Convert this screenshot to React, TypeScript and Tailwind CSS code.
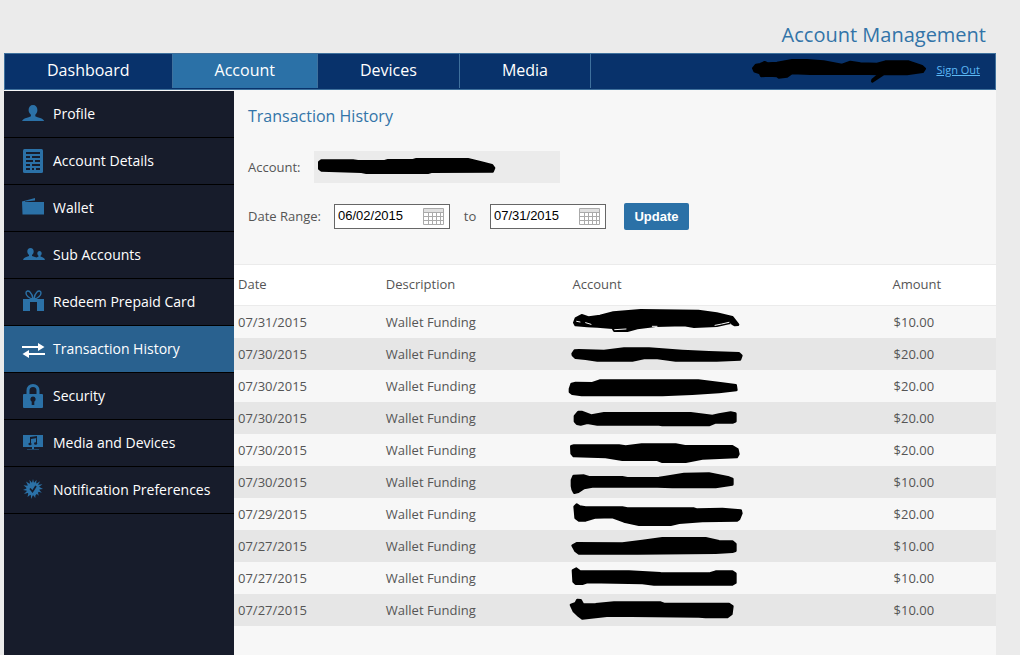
import { useState } from "react";
import type { ReactNode } from "react";
import clsx from "clsx";

const tabs = ["Dashboard", "Account", "Devices", "Media"];

const menu: { label: string; icon: ReactNode }[] = [
  {
    label: "Profile",
    icon: (
      <path d="M12 3c2.700 0 4.400 2 4.400 5 0 2-.9 3.700-2.100 4.700v1.300c0 .6 1.500 1 3.900 1.700 2.600.7 4.300 1.700 5 3.300H1c.7-1.600 2.400-2.600 5-3.300C8.400 15 9.900 14.600 9.900 14v-1.300C8.700 11.700 7.600 10 7.600 8c0-3 1.700-5 4.400-5z" />
    ),
  },
  {
    label: "Account Details",
    icon: (
      <>
        <rect x="2" y="0" width="20" height="24" rx="1.500" />
        <g fill="#171c2b">
          <path d="M5 3h14v2H5zM5 7h4v2H5zM11 7h8v2h-8zM5 11h7v2H5zM14 11h5v2h-5zM5 15h4v2H5zM11 15h8v2h-8zM5 19h4v2H5zM11 19h2v2h-2zM15 19h4v2h-4z" />
        </g>
      </>
    ),
  },
  {
    label: "Wallet",
    icon: <path d="M1 5.500L14 2v2.500L4 5.500v.5h19v12.500H1.500z" />,
  },
  {
    label: "Sub Accounts",
    icon: (
      <path d="M9.500 5c2 0 3.200 1.400 3.200 3.500 0 1.500-.7 2.700-1.700 3.400v1l4.500 1.600 2-.9v-.9c-.8-.5-1.200-1.300-1.200-2.200 0-1.600.9-2.600 2.200-2.600s2.200 1 2.200 2.600c0 .9-.4 1.700-1.200 2.200v.9c2 .7 4 1.200 4.500 3.400H2c.5-2.500 3-3 6-4.100v-1c-1-.7-1.700-1.900-1.700-3.400C6.300 6.400 7.500 5 9.500 5z" />
    ),
  },
  {
    label: "Redeem Prepaid Card",
    icon: (
      <>
        <path d="M2 9h7v12H2zM9 9h7v3H9zM16 9h7v12h-7z" />
        <path
          d="M12 9C8 8.500 5 5.500 5 3 5 .8 7.500.3 9 2 11 4 11.800 6.500 12 9zM13 9c4-.5 7-3.500 7-6 0-2.200-2.500-2.700-4-1C14 4 13.200 6.500 13 9z"
          fill="none"
          stroke="currentColor"
          strokeWidth="1.400"
        />
      </>
    ),
  },
  {
    label: "Transaction History",
    icon: <path d="M1 9h16V6l6.500 4-6.500 4v-3H1zM24 16H8V13l-6.500 4L8 21V18h16z" />,
  },
  {
    label: "Security",
    icon: (
      <>
        <path d="M3 10h18a1 1 0 0 1 1 1v12a1 1 0 0 1-1 1H3a1 1 0 0 1-1-1V11a1 1 0 0 1 1-1z" />
        <path d="M7 11V6.500C7 3.500 9 1.500 12 1.500s5 2 5 5V11" fill="none" stroke="currentColor" strokeWidth="3" />
        <path d="M12 12.500a2.800 2.800 0 0 1 1.300 5.200V21h-2.600v-3.300A2.800 2.800 0 0 1 12 12.500z" fill="#171c2b" />
      </>
    ),
  },
  {
    label: "Media and Devices",
    icon: (
      <>
        <path d="M2 4h20v12h-9v2h-2v-2H2z" />
        <path d="M6 18h12v1H6z" opacity=".5" />
        <g fill="#171c2b">
          <path d="M9 6l7-1v2l-6 1v5H9zM15 6h1v7h-1z" />
          <ellipse cx="9" cy="13" rx="1.600" ry="1.300" />
          <ellipse cx="14.600" cy="12.500" rx="1.600" ry="1.300" />
        </g>
      </>
    ),
  },
  {
    label: "Notification Preferences",
    icon: (
      <>
        <circle cx="12" cy="11" r="6.500" />
        <path d="M12 1l1 4 2.500-3.300-.3 4 4-2.500-2.200 3.600 4.500-.6-3.500 2.500 4 2.300-4.200.4 3 3.300-4.100-1.300 1 4.300-3-3L14.200 20 12 16.500 10.300 21l-.6-4.600L6.500 19l1-4.200L3 16l3.200-3.200L2 12l4-1.800-3.500-3 4.500.6L5 3.500 9 6l-.5-4.300L11 5z" />
        <path d="M9 10.500l2.500 3L15 8" fill="none" stroke="#171c2b" strokeWidth="1.700" />
      </>
    ),
  },
];

// marks are drawn at three units to the pixel
const rows = [
  {
    date: "07/31/2015",
    amount: "$10.00",
    mark: "M16 50L21 37 38 28 60 35 93 30 133 20 215 13 388 15 443 23 490 34 507 56 498 57 483 50 443 59 375 62 345 57 260 59 205 66 175 74 136 74 131 65 85 61 55 60 20 57z",
    gaps: "M23 46l10 2M50 50l16 5M137 71l34-2M250 61h14M438 58l20-4 22-5M484 54l6 6",
  },
  { date: "07/30/2015", amount: "$20.00", mark: "M11 47L17 38 30 37 105 39 165 32 240 32 340 39 420 43 510 46 517 53 513 64 443 67 320 67 265 60 225 60 190 67 85 67 50 62 20 59 12 52z" },
  { date: "07/30/2015", amount: "$20.00", mark: "M3 57L8 42 20 39 70 40 92 32 388 32 460 41 500 46 502 60 450 66 370 71 280 75 38 75 10 71 3 66z" },
  { date: "07/30/2015", amount: "$20.00", mark: "M18 42L28 30 38 30 68 41 105 34 365 34 430 42 450 38 485 32 499 35 499 58 492 61 440 61 420 69 280 69 270 67 85 67 55 62 35 67 24 65 18 58z" },
  { date: "07/30/2015", amount: "$20.00", mark: "M7 37L15 35 150 35 170 38 218 32 320 32 348 37 490 37 505 46 508 60 503 69 400 73 350 83 280 83 265 77 160 77 110 69 14 66 8 58z" },
  { date: "07/30/2015", amount: "$10.00", mark: "M9 42L14 30 45 29 60 34 160 34 175 37 270 36 290 33 345 24 420 23 480 35 490 39 490 55 440 63 310 63 265 61 70 61 45 66 28 77 16 80 11 70 9 60z" },
  { date: "07/29/2015", amount: "$20.00", mark: "M17 26L23 20 32 26 50 29 160 29 175 32 375 32 385 35 460 33 515 38 517 46 510 63 505 67 400 69 330 74 305 80 210 80 165 70 130 57 80 58 50 67 30 67 20 60z" },
  { date: "07/27/2015", amount: "$10.00", mark: "M11 47L23 40 160 41 220 33 280 25 410 25 450 34 490 35 499 42 499 62 490 65 440 68 205 70 30 70 20 63z" },
  { date: "07/27/2015", amount: "$10.00", mark: "M12 25L22 20 32 28 180 29 275 34 420 35 440 29 490 29 499 35 499 62 490 67 255 67 220 63 55 60 40 65 20 65 14 59z" },
  { date: "07/27/2015", amount: "$10.00", mark: "M6 33L20 28 25 18 35 19 42 32 80 31 135 26 275 26 285 30 480 30 490 37 487 60 475 69 410 69 390 67 120 64 80 69 40 73 30 66 15 52z" },
];

function DateField({ id, label, value, onChange }: { id: string; label: string; value: string; onChange: (v: string) => void }) {
  return (
    <div className="flex h-[25px] w-[116px] items-center justify-between border border-[#666] bg-white pl-[3px] pr-[5px]">
      <input
        id={id}
        type="text"
        aria-label={label}
        value={value}
        onChange={(e) => onChange(e.target.value)}
        className="w-20 pb-px font-['Liberation_Sans',Arial,sans-serif] text-[13px] leading-5 text-black focus:outline-none"
      />
      <button type="button" aria-label={`Pick ${label}`}>
        <svg width="21" height="17" viewBox="0 0 21 17" className="block" fill="none" stroke="#aaa">
          <path d="M.5.5h20v16H.5zM1 4.500h19M1 8.500h19M1 12.500h19M5.500 5v11M9.500 5v11M13.500 5v11M17.500 5v11" />
          <path d="M1 2.500h19" stroke="#e0e0e0" strokeWidth="3" />
        </svg>
      </button>
    </div>
  );
}

export default function App() {
  const [from, setFrom] = useState("06/02/2015");
  const [to, setTo] = useState("07/31/2015");

  return (
    <div className="flex min-h-screen flex-col bg-[#ebebeb] pl-1 pr-6 font-['Open_Sans','Noto_Sans',sans-serif] text-[13px] text-[#555]">
      <header>
        <div className="flex h-[53px] items-end justify-end pb-1 pr-2.5">
          <h1 className="text-xl leading-7 text-[#3274a8]">Account Management</h1>
        </div>
        <div className="flex items-center justify-between border border-[#3f719d] bg-[#08326b] pb-px">
          <nav className="flex">
            {tabs.map((tab) => (
              <a
                key={tab}
                href="#"
                className={clsx(
                  "h-[34px] border-r border-[#3f719d] px-[42px] text-base leading-8 text-white",
                  tab === "Account" && "bg-[#2b71a7]"
                )}
              >
                {tab}
              </a>
            ))}
          </nav>
          <div className="flex items-center gap-2.5 pr-[15px]">
            <svg width="174" height="25" viewBox="0 0 522 75" stroke="#000" strokeWidth="8" strokeLinejoin="round">
              <path d="M4 28L12 18 25 16 38 10 48 14 75 12 120 4 165 4 215 8 270 18 295 9 325 14 375 15 400 8 470 8 510 22 518 29 512 38 465 45 395 45 361 67 362 62 383 45 350 44 175 44 120 42 105 52 80 55 75 51 50 49 28 51 24 42 8 37z" />
            </svg>
            <a href="#" className="pb-0.5 text-[11px] leading-4 text-[#5cb8f5] underline">
              Sign Out
            </a>
          </div>
        </div>
      </header>

      <div className="flex flex-1 bg-[#f7f7f7]">
        <aside className="mt-px w-[230px] shrink-0 bg-[#171c2b]">
          <ul>
            {menu.map(({ label, icon }) => {
              const active = label === "Transaction History";
              return (
                <li key={label} className="border-b border-black">
                  <a
                    href="#"
                    className={clsx("flex h-[46px] items-center gap-2 pl-[17px] text-sm text-white", active && "bg-[#29618f]")}
                  >
                    <svg
                      width="24"
                      height="24"
                      viewBox="0 0 24 24"
                      fill="currentColor"
                      className={clsx("shrink-0", active ? "text-white" : "text-[#2b71a7]")}
                    >
                      {icon}
                    </svg>
                    {label}
                  </a>
                </li>
              );
            })}
          </ul>
        </aside>

        <main className="min-w-0 flex-1">
          <section className="h-[174px] pl-3.5 pt-3.5">
            <h2 className="text-base leading-6 text-[#3274a8]">Transaction History</h2>
            <div className="mt-[23px] flex items-center">
              <span className="w-[66px] pt-0.5">Account:</span>
              <div className="flex h-8 w-[246px] items-center bg-[#ebebeb] pl-1">
                <svg
                  width="178"
                  height="16"
                  viewBox="0 0 534 48"
                  className="mb-0.5 overflow-visible"
                  stroke="#000"
                  strokeWidth="8"
                  strokeLinejoin="round"
                >
                  <path d="M4 12L10 8 105 8 120 10 200 10 210 7 285 7 295 4 450 4 490 14 522 22 528 30 524 40 340 41 330 44 145 44 130 41 10 37 4 32z" />
                </svg>
              </div>
            </div>
            <form className="mt-5 flex items-center" onSubmit={(e) => e.preventDefault()}>
              <label htmlFor="from" className="w-[86px]">
                Date Range:
              </label>
              <DateField id="from" label="start date" value={from} onChange={setFrom} />
              <label htmlFor="to" className="w-10 text-center">
                to
              </label>
              <DateField id="to" label="end date" value={to} onChange={setTo} />
              <button
                type="submit"
                className="ml-[18px] h-[27px] w-[65px] rounded-xs bg-[#2b71a7] font-['Liberation_Sans',Arial,sans-serif] text-[13px] font-bold text-white"
              >
                Update
              </button>
            </form>
          </section>

          <table className="w-full table-fixed border-separate border-spacing-0 text-left">
            <thead className="bg-white">
              <tr className="h-[42px] *:border-y *:border-[#ebebeb] *:pl-1 *:font-normal">
                <th className="w-[19.4%]">Date</th>
                <th className="w-[24.5%]">Description</th>
                <th className="w-[42%]">Account</th>
                <th>Amount</th>
              </tr>
            </thead>
            <tbody>
              {rows.map((row, i) => (
                <tr key={i} className="h-8 even:bg-[#e6e6e6]">
                  <td className="pl-1 pt-0.5">{row.date}</td>
                  <td className="pl-1 pt-0.5">Wallet Funding</td>
                  <td>
                    <svg
                      width="180"
                      height="32"
                      viewBox="0 0 540 96"
                      className="block overflow-visible"
                      strokeLinejoin="round"
                      strokeLinecap="round"
                    >
                      <path d={row.mark} stroke="#000" strokeWidth="8" />
                      {row.gaps && <path d={row.gaps} fill="none" stroke="#f7f7f7" strokeWidth="3" />}
                    </svg>
                  </td>
                  <td className="pl-[5px] pt-0.5">{row.amount}</td>
                </tr>
              ))}
            </tbody>
          </table>
        </main>
      </div>
    </div>
  );
}
